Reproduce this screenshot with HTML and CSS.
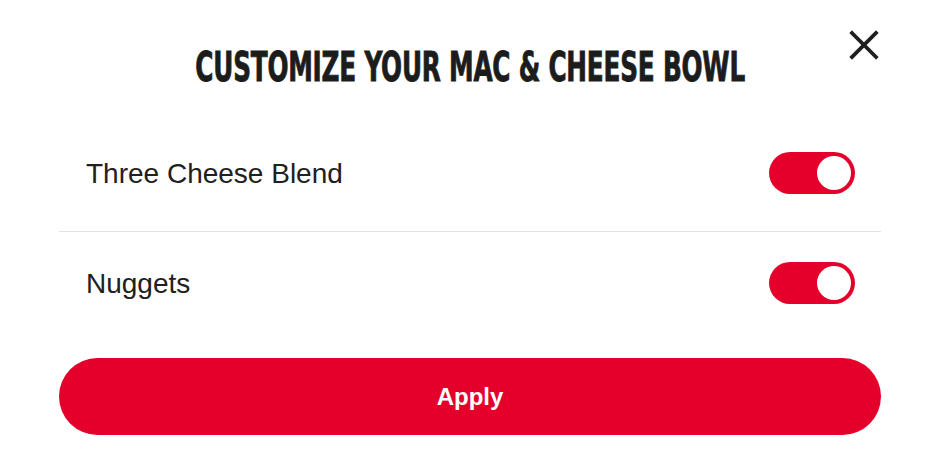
FILE: index.html
```html
<!DOCTYPE html>
<html>
<head>
<meta charset="utf-8">
<link rel="stylesheet" href="styles.css">
</head>
<body>
<div class="modal">
  <button class="close" aria-label="Close">
    <svg width="30" height="30" viewBox="0 0 30 30"><path d="M3 3 L27 27 M27 3 L3 27" stroke="#1f1f1f" stroke-width="3.8" stroke-linecap="square" fill="none"/></svg>
  </button>
  <h1 class="title"><span class="title-text">CUSTOMIZE YOUR MAC &amp; CHEESE BOWL</span></h1>
  <div class="options">
    <div class="row first">
      <span class="label">Three Cheese Blend</span>
      <span class="toggle"><span class="knob"></span></span>
    </div>
    <div class="row second">
      <span class="label">Nuggets</span>
      <span class="toggle"><span class="knob"></span></span>
    </div>
  </div>
  <button class="apply">Apply</button>
</div>
</body>
</html>
```
FILE: styles.css
```css
html, body {
  margin: 0;
  padding: 0;
  background: #ffffff;
}
.modal {
  position: relative;
  width: 944px;
  height: 475px;
  box-sizing: border-box;
  padding: 43px 63px 0 59px;
  display: flex;
  flex-direction: column;
}
.close {
  position: absolute;
  top: 30px;
  right: 65px;
  width: 30px;
  height: 30px;
  padding: 0;
  border: 0;
  background: none;
}
.title {
  margin: 0 0 24px 0;
  font-family: "DejaVu Sans Condensed", "Liberation Sans Narrow", sans-serif;
  font-weight: 700;
  font-size: 41px;
  line-height: 48px;
  height: 48px;
  text-align: center;
  color: #1c1c1c;
  white-space: nowrap;
}
.title-text {
  display: inline-block;
  transform: scaleX(0.67);
  transform-origin: center;
  letter-spacing: -0.3px;
  -webkit-text-stroke: 0.9px #1c1c1c;
}
.options {
  display: flex;
  flex-direction: column;
}
.row {
  display: flex;
  align-items: center;
  justify-content: space-between;
  padding-left: 27px;
  padding-right: 26px;
}
.row.first {
  padding-top: 37px;
  padding-bottom: 37px;
  border-bottom: 1px solid #e2e2e2;
}
.row.second {
  padding-top: 30px;
  padding-bottom: 30px;
}
.label {
  font-family: "Liberation Sans", Arial, sans-serif;
  font-size: 28px;
  line-height: 32px;
  padding-top: 2px;
  color: #202020;
}
.toggle {
  width: 86px;
  height: 42px;
  box-sizing: border-box;
  border-radius: 21px;
  background: #e4002b;
  display: flex;
  align-items: center;
  justify-content: flex-end;
  padding-right: 4px;
}
.knob {
  width: 34px;
  height: 34px;
  border-radius: 50%;
  background: #ffffff;
}
.apply {
  margin-top: 24px;
  height: 77px;
  border: 0;
  border-radius: 39px;
  background: #e4002b;
  color: #ffffff;
  font-family: "Liberation Sans", Arial, sans-serif;
  font-weight: 700;
  font-size: 24px;
}
```
